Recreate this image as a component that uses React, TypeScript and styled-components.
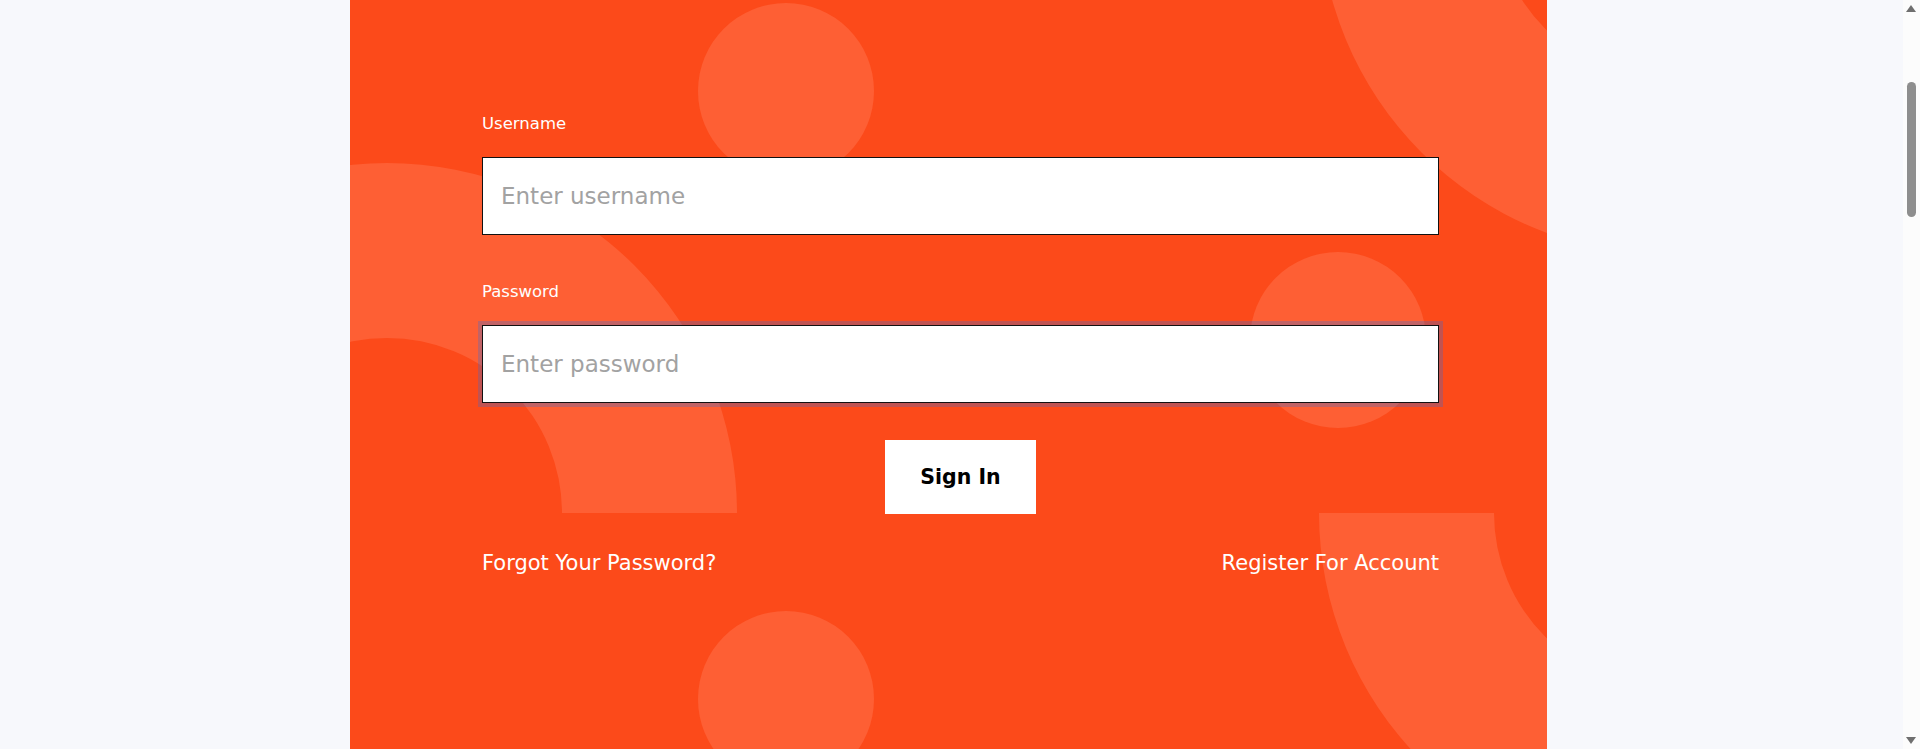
import React from 'react';
import styled, { createGlobalStyle } from 'styled-components';

const GlobalStyle = createGlobalStyle`
  html, body {
    margin: 0;
    padding: 0;
    background: #f7f8fc;
    overflow: hidden;
    scrollbar-width: none;
  }
  html::-webkit-scrollbar, body::-webkit-scrollbar { display: none; }
  body {
    font-family: "DejaVu Sans", "Liberation Sans", sans-serif;
  }
  *, *::before, *::after { box-sizing: border-box; }
`;

const Page = styled.div`
  min-height: 100vh;
  display: flex;
  align-items: stretch;
`;

const Panel = styled.main`
  position: relative;
  overflow: hidden;
  width: 1197px;
  margin-left: 350px;
  height: 100vh;
  background: #fc4a1a;
  padding: 114px 108px 0 132px;
`;

const Decor = styled.svg`
  position: absolute;
  left: 0;
  top: 0;
  width: 1197px;
  height: 800px;
  pointer-events: none;
  z-index: 0;
`;

const Form = styled.form`
  position: relative;
  z-index: 1;
  width: 957px;
  display: flex;
  flex-direction: column;
`;

const Field = styled.div<{ $gap?: number }>`
  display: flex;
  flex-direction: column;
  margin-bottom: ${(p) => p.$gap ?? 0}px;
`;

const Label = styled.label`
  display: block;
  color: #ffffff;
  font-size: 16.5px;
  line-height: 20px;
  margin-bottom: 23px;
`;

const Input = styled.input<{ $focused?: boolean }>`
  width: 100%;
  height: 78px;
  padding: 0 18px;
  border: 1px solid #111;
  border-radius: 0;
  background: #ffffff;
  font-family: "DejaVu Sans", "Liberation Sans", sans-serif;
  font-size: 23px;
  color: #222;
  outline: none;
  box-shadow: ${(p) => (p.$focused ? '0 0 0 4px rgba(13, 110, 253, 0.25)' : 'none')};
  &::placeholder {
    color: #a2a2a2;
    opacity: 1;
  }
`;

const SubmitButton = styled.button`
  align-self: center;
  width: 151px;
  height: 74px;
  margin-top: 37px;
  border: none;
  border-radius: 0;
  background: #ffffff;
  color: #000;
  font-family: "DejaVu Sans", "Liberation Sans", sans-serif;
  font-weight: 700;
  font-size: 20.5px;
  cursor: pointer;
`;

const LinkRow = styled.div`
  display: flex;
  justify-content: space-between;
  margin-top: 37px;
`;

const TextLink = styled.a`
  color: #ffffff;
  text-decoration: none;
  font-size: 21px;
  line-height: 24px;
`;

/* browser-style vertical scrollbar drawn over the right edge */
const ScrollTrack = styled.div`
  position: fixed;
  top: 0;
  right: 0;
  width: 17px;
  height: 100vh;
  background: #fcfcfc;
  z-index: 10;
`;

const ScrollArrow = styled.div<{ $dir: 'up' | 'down' }>`
  position: absolute;
  left: 3px;
  ${(p) => (p.$dir === 'up' ? 'top: 5px;' : 'bottom: 5px;')}
  width: 0;
  height: 0;
  border-left: 5.5px solid transparent;
  border-right: 5.5px solid transparent;
  ${(p) =>
    p.$dir === 'up'
      ? 'border-bottom: 7px solid #6f6f6f;'
      : 'border-top: 7px solid #6f6f6f;'}
`;

const ScrollThumb = styled.div`
  position: absolute;
  left: 4px;
  top: 82px;
  width: 9px;
  height: 135px;
  border-radius: 5px;
  background: #8e8e8e;
`;

const SHAPE = '#fe5f34';

function halfRingTop(cx: number, cy: number, R: number, r: number) {
  return `M ${cx - R} ${cy} A ${R} ${R} 0 0 1 ${cx + R} ${cy} L ${cx + r} ${cy} A ${r} ${r} 0 0 0 ${cx - r} ${cy} Z`;
}

function halfRingBottom(cx: number, cy: number, R: number, r: number) {
  return `M ${cx - R} ${cy} L ${cx - r} ${cy} A ${r} ${r} 0 0 0 ${cx + r} ${cy} L ${cx + R} ${cy} A ${R} ${R} 0 0 1 ${cx - R} ${cy} Z`;
}

export default function App() {
  return (
    <>
      <GlobalStyle />
      <Page>
        <Panel>
          <Decor viewBox="0 0 1197 800" aria-hidden="true">
            <circle cx={436} cy={91} r={88} fill={SHAPE} />
            <circle cx={988} cy={340} r={88} fill={SHAPE} />
            <circle cx={436} cy={699} r={88} fill={SHAPE} />
            <path d={halfRingTop(37, 513, 350, 175)} fill={SHAPE} />
            <path d={halfRingBottom(1319, 513, 350, 175)} fill={SHAPE} />
            <path d={halfRingBottom(1319, -95, 350, 175)} fill={SHAPE} />
          </Decor>
          <Form onSubmit={(e) => e.preventDefault()}>
            <Field $gap={47}>
              <Label htmlFor="username">Username</Label>
              <Input id="username" type="text" placeholder="Enter username" />
            </Field>
            <Field>
              <Label htmlFor="password">Password</Label>
              <Input id="password" type="password" placeholder="Enter password" $focused />
            </Field>
            <SubmitButton type="submit">Sign In</SubmitButton>
            <LinkRow>
              <TextLink href="#">Forgot Your Password?</TextLink>
              <TextLink href="#">Register For Account</TextLink>
            </LinkRow>
          </Form>
        </Panel>
      </Page>
      <ScrollTrack aria-hidden="true">
        <ScrollArrow $dir="up" />
        <ScrollThumb />
        <ScrollArrow $dir="down" />
      </ScrollTrack>
    </>
  );
}
